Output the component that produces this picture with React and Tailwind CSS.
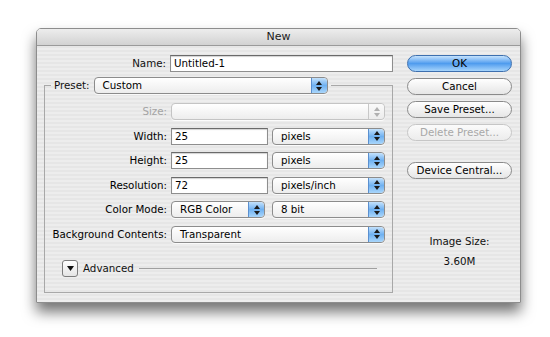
import React from 'react'

const font = { fontFamily: '"DejaVu Sans", "Liberation Sans", sans-serif' }

function Stepper({ disabled }) {
  return (
    <div
      className={
        'flex h-full w-[16px] flex-col items-center justify-center gap-[2px] rounded-r-[4px] border-l ' +
        (disabled
          ? 'border-[#c8c8c8] bg-gradient-to-b from-[#fafafa] to-[#ececec]'
          : 'border-[#5a8fcf] bg-gradient-to-b from-[#c3e1fb] via-[#6fb1f1] to-[#a9d6fb]')
      }
    >
      <svg width="6" height="4" viewBox="0 0 6 4">
        <path d="M3 0 L6 4 L0 4 Z" fill={disabled ? '#b0b0b0' : '#1a1a1a'} />
      </svg>
      <svg width="6" height="4" viewBox="0 0 6 4">
        <path d="M0 0 L6 0 L3 4 Z" fill={disabled ? '#b0b0b0' : '#1a1a1a'} />
      </svg>
    </div>
  )
}

function Popup({ w, children, disabled }) {
  return (
    <div
      className={
        'flex h-[17px] items-stretch rounded-[4px] border bg-gradient-to-b from-white to-[#ededed] shadow-[0_1px_0_rgba(255,255,255,0.8)] ' +
        w +
        (disabled ? ' border-[#c4c4c4]' : ' border-[#8c8c8c]')
      }
    >
      <div className="flex flex-1 items-center pl-[8px] text-black leading-none">{children}</div>
      <Stepper disabled={disabled} />
    </div>
  )
}

function Field({ w, value }) {
  return (
    <div
      className={
        'flex h-[17px] items-center border border-[#8e8e8e] border-t-[#6a6a6a] bg-white pl-[3px] text-black shadow-[inset_0_1px_1px_rgba(0,0,0,0.18)] leading-none ' +
        w
      }
    >
      {value}
    </div>
  )
}

function Btn({ children, blue, disabled }) {
  return (
    <div
      className={
        'flex h-[17px] w-[105px] items-center justify-center rounded-full border leading-none ' +
        (blue
          ? 'border-[#3d6fae] bg-gradient-to-b from-[#c4e2fc] via-[#4f9cee] to-[#a6d4fb] text-black'
          : disabled
          ? 'border-[#c6c6c6] bg-gradient-to-b from-[#fbfbfb] to-[#ececec] text-[#a8a8a8]'
          : 'border-[#8a8a8a] bg-gradient-to-b from-white via-[#f2f2f2] to-[#e6e6e6] text-black')
      }
    >
      {children}
    </div>
  )
}

function Row({ label, disabled, children }) {
  return (
    <div className="flex h-[17px] items-center">
      <div className={'w-[122px] text-right leading-none ' + (disabled ? 'text-[#a3a3a3]' : 'text-black')}>
        {label}
      </div>
      <div className="ml-[4px] flex items-center">{children}</div>
    </div>
  )
}

export default function App() {
  return (
    <div className="h-[337px] w-[550px] bg-white pl-[36px] pt-[28px] text-[10.3px] text-[#111]" style={font}>
      <div className="w-[485px] overflow-hidden rounded-t-[5px] border border-[#8d8d8d] shadow-[0_9px_14px_rgba(0,0,0,0.55)]">
        <div className="flex h-[17px] items-center justify-center border-b border-[#9a9a9a] bg-gradient-to-b from-[#ededed] to-[#d2d2d2] text-[11px] text-[#1a1a1a]">
          New
        </div>
        <div className="flex bg-[repeating-linear-gradient(0deg,#ededed_0px,#ededed_2px,#e6e6e6_2px,#e6e6e6_4px)] pb-[9px]">
          <div className="w-[363px]">
            <div className="flex items-center pt-[9px]">
              <div className="w-[129px] text-right leading-none">Name:</div>
              <div className="ml-[4px]">
                <Field w="w-[223px]" value="Untitled-1" />
              </div>
            </div>

            <fieldset className="ml-[7px] mt-[5px] w-[349px] border border-[#a8a8a8] px-0 pb-[15px]">
              <legend className="ml-[6px] flex items-center px-[3px]">
                <span className="mr-[4px] leading-none">Preset:</span>
                <Popup w="w-[234px]">Custom</Popup>
              </legend>
              <div className="flex flex-col gap-[7.5px] pt-[9px]">
                <Row label="Size:" disabled>
                  <Popup w="w-[214px]" disabled>
                    {''}
                  </Popup>
                </Row>
                <Row label="Width:">
                  <Field w="w-[97px]" value="25" />
                  <div className="ml-[4px]">
                    <Popup w="w-[113px]">pixels</Popup>
                  </div>
                </Row>
                <Row label="Height:">
                  <Field w="w-[97px]" value="25" />
                  <div className="ml-[4px]">
                    <Popup w="w-[113px]">pixels</Popup>
                  </div>
                </Row>
                <Row label="Resolution:">
                  <Field w="w-[97px]" value="72" />
                  <div className="ml-[4px]">
                    <Popup w="w-[113px]">pixels/inch</Popup>
                  </div>
                </Row>
                <Row label="Color Mode:">
                  <Popup w="w-[94px]">RGB Color</Popup>
                  <div className="ml-[7px]">
                    <Popup w="w-[113px]">8 bit</Popup>
                  </div>
                </Row>
                <Row label="Background Contents:">
                  <Popup w="w-[214px]">Transparent</Popup>
                </Row>
              </div>

              <div className="ml-[17px] mr-[15px] mt-[17px] flex h-[17px] items-center">
                <div className="flex h-[17px] w-[16px] items-center justify-center rounded-[3px] border border-[#7c7c7c] bg-gradient-to-b from-white to-[#e4e4e4]">
                  <svg width="7" height="5" viewBox="0 0 7 5">
                    <path d="M0 0 L7 0 L3.5 5 Z" fill="#111" />
                  </svg>
                </div>
                <span className="ml-[5px] leading-none">Advanced</span>
                <div className="ml-[5px] h-px flex-1 bg-[#a0a0a0]" />
              </div>
            </fieldset>
          </div>

          <div className="ml-[7px] flex w-[105px] flex-col pt-[9px]">
            <div className="flex flex-col gap-[6px]">
              <Btn blue>OK</Btn>
              <Btn>Cancel</Btn>
              <Btn>Save Preset...</Btn>
              <Btn disabled>Delete Preset...</Btn>
            </div>
            <div className="mt-[21px]">
              <Btn>Device Central...</Btn>
            </div>
            <div className="mt-[56px] text-center leading-[12px]">Image Size:</div>
            <div className="mt-[8px] text-center leading-[12px]">3.60M</div>
          </div>
        </div>
      </div>
    </div>
  )
}
